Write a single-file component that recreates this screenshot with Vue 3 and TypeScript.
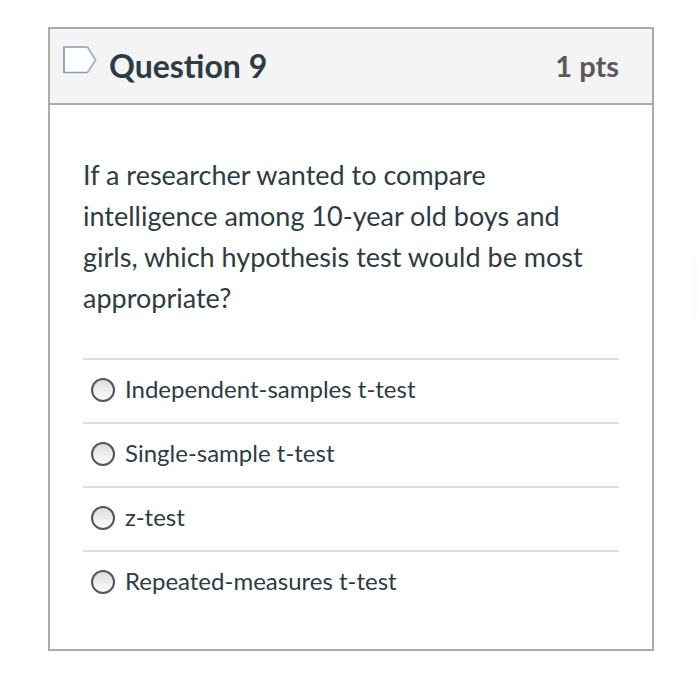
<script setup lang="ts">
import { ref } from 'vue'

const answers: string[] = [
  'Independent-samples t-test',
  'Single-sample t-test',
  'z-test',
  'Repeated-measures t-test',
]
const selected = ref<string>('')
const flagged = ref<boolean>(false)
</script>

<template>
  <main class="page">
    <section class="question">
      <header class="head">
        <button class="flag" type="button" aria-label="Flag question" :aria-pressed="flagged" @click="flagged = !flagged">
          <svg width="36" height="30" viewBox="0 0 36 30" fill="none">
            <path d="M2 2H25.5L33.5 15L25.5 27.5H2Z" fill="#fff" />
            <path d="M25.5 27.5L33.5 15L25.5 2" stroke="#9fb9cb" stroke-width="2" />
            <path d="M25.5 27.5H2V2H25.5" stroke="#849db0" stroke-width="1.7" />
          </svg>
        </button>
        <h1 class="title">Question 9</h1>
        <span class="points">1 pts</span>
      </header>
      <div class="body">
        <p class="prompt">If a researcher wanted to compare intelligence among 10-year old boys and girls, which hypothesis test would be most appropriate?</p>
        <div class="answers" role="radiogroup" aria-label="Answers">
          <label v-for="answer in answers" :key="answer" class="answer">
            <input v-model="selected" class="radio" type="radio" name="answer" :value="answer" />
            <span class="answer-text">{{ answer }}</span>
          </label>
        </div>
      </div>
    </section>
    <div class="handle"></div>
  </main>
</template>

<style>
body {
  background: #fff;
}
</style>

<style scoped>
.page {
  position: relative;
  padding: 27px 46px 39px 48px;
  font-family: Lato, "Liberation Sans", sans-serif;
  color: #2d3b45;
}
.question {
  border: 2px solid #aaa;
}
.head {
  display: flex;
  align-items: center;
  height: 74px;
  padding: 0 33px 0 12px;
  background: #f4f4f4;
  border-bottom: 2px solid #aaa;
}
.flag {
  display: flex;
  margin: 0 11px 12px 0;
  padding: 0;
  border: 0;
  background: none;
}
.title {
  flex: 1;
  margin: 0;
  font-size: 32px;
  font-weight: 700;
  line-height: 40px;
}
.points {
  font-size: 29px;
  font-weight: 700;
  line-height: 40px;
  color: #595959;
}
.body {
  padding: 49px 33px 35px;
}
.prompt {
  margin: 0 0 40px;
  font-size: 27px;
  line-height: 41px;
}
.answer {
  display: flex;
  align-items: center;
  gap: 10px;
  height: 60px;
  padding: 0 0 2px 8px;
  border-top: 2px solid #ddd;
  font-size: 24px;
}
.answer-text {
  padding-bottom: 4px;
}
.radio {
  appearance: none;
  box-sizing: border-box;
  width: 24px;
  height: 24px;
  margin: 0;
  border: 2px solid #555;
  border-radius: 50%;
  background: linear-gradient(#dedede, #fbfbfb);
}
.radio:checked {
  background: radial-gradient(circle, #2d3b45 35%, #f0f0f0 40%);
}
.handle {
  position: absolute;
  top: 258px;
  right: 3px;
  width: 5px;
  height: 60px;
  background: #fafafa;
}
</style>
